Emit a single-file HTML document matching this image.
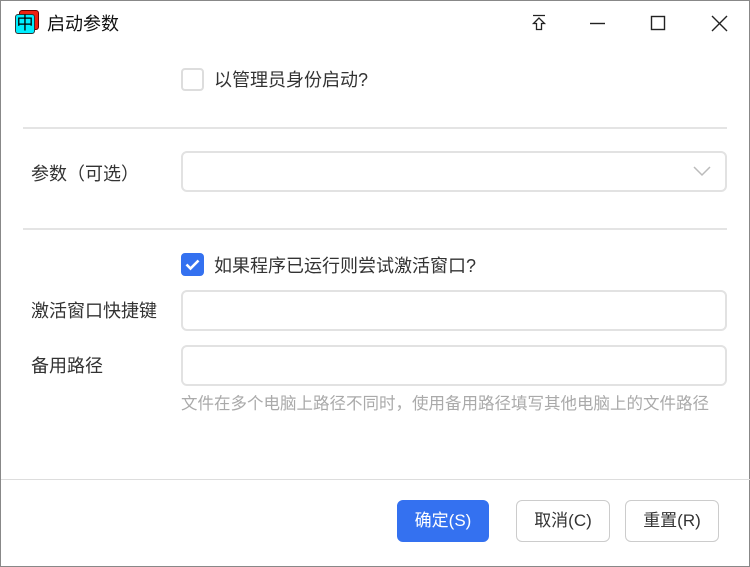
<!DOCTYPE html>
<html><head><meta charset="utf-8"><style>
*{box-sizing:border-box;margin:0;padding:0}
body{width:750px;height:567px;background:#fff;font-family:"Liberation Sans","Noto Sans CJK SC",sans-serif;position:relative;overflow:hidden;color:#333}
.win{position:absolute;left:0;top:0;width:750px;height:567px;border:1px solid #888}
.a{position:absolute}
.title{left:46px;top:9px;font-size:18px;color:#111}
.cb{width:23px;height:23px;border:2px solid #ddd;border-radius:4px}
.cbx{width:23px;height:23px;background:#3471f0;border-radius:4px}
.lab{font-size:18px;color:#333}
.hr{height:2px;background:#e4e4e4;left:22px;width:704px}
.inp{left:180px;width:546px;height:41px;border:2px solid #e2e2e2;border-radius:6px}
.btn{height:42px;border-radius:6px;font-size:17px;text-align:center;line-height:40px;border:1px solid #ccc;color:#333}
</style></head><body><div class="win">
<div class="a" style="left:14px;top:9px;width:24px;height:24px">
<div class="a" style="left:4px;top:0;width:20px;height:20px;background:#e21;border-radius:3px;border:1px solid #600"></div>
<div class="a" style="left:0;top:4px;width:20px;height:20px;background:#0ef;border-radius:3px;border:1px solid #333;font-size:17px;line-height:18px;text-align:center;color:#000">中</div>
</div>
<div class="a title">启动参数</div>
<svg class="a" style="left:529px;top:13px" width="18" height="18" viewBox="0 0 18 18" fill="none" stroke="#222" stroke-width="1.3"><path d="M3 1.5H15M9 4L3.5 9.5H6.5V15.5H11.5V9.5H14.5Z"/></svg>
<svg class="a" style="left:588px;top:14px" width="18" height="18" viewBox="0 0 18 18" stroke="#222" stroke-width="1.4"><path d="M1 8.5H16"/></svg>
<svg class="a" style="left:649px;top:14px" width="18" height="18" viewBox="0 0 18 18" fill="none" stroke="#222" stroke-width="1.4"><rect x="1.5" y="1.5" width="13" height="13"/></svg>
<svg class="a" style="left:710px;top:14px" width="18" height="18" viewBox="0 0 18 18" fill="none" stroke="#222" stroke-width="1.4"><path d="M1 1L16 16M16 1L1 16"/></svg>

<div class="a cb" style="left:180px;top:67px"></div>
<div class="a lab" style="left:213px;top:65px">以管理员身份启动?</div>
<div class="a hr" style="top:126px"></div>
<div class="a lab" style="left:30px;top:159px">参数（可选）</div>
<div class="a inp" style="top:150px"></div>
<svg class="a" style="left:691px;top:163px" width="20" height="14" viewBox="0 0 20 14" fill="none" stroke="#bbb" stroke-width="1.5"><path d="M2 3L10 11L18 3"/></svg>
<div class="a hr" style="top:227px"></div>
<div class="a cbx" style="left:180px;top:252px"><svg width="23" height="23" viewBox="0 0 23 23" fill="none" stroke="#fff" stroke-width="2.6"><path d="M5.5 11.5L9.5 15.5L17.5 7.5"/></svg></div>
<div class="a lab" style="left:213px;top:251px">如果程序已运行则尝试激活窗口?</div>
<div class="a lab" style="left:30px;top:296px">激活窗口快捷键</div>
<div class="a inp" style="top:289px"></div>
<div class="a lab" style="left:30px;top:351px">备用路径</div>
<div class="a inp" style="top:344px"></div>
<div class="a" style="left:180px;top:389px;font-size:16.5px;color:#aaa">文件在多个电脑上路径不同时，使用备用路径填写其他电脑上的文件路径</div>
<div class="a" style="left:0;top:478px;width:750px;height:1px;background:#ddd"></div>
<div class="a btn" style="left:396px;top:499px;width:92px;background:#3471f0;border-color:#3471f0;color:#fff">确定(S)</div>
<div class="a btn" style="left:515px;top:499px;width:94px">取消(C)</div>
<div class="a btn" style="left:624px;top:499px;width:94px">重置(R)</div>
</div></body></html>
